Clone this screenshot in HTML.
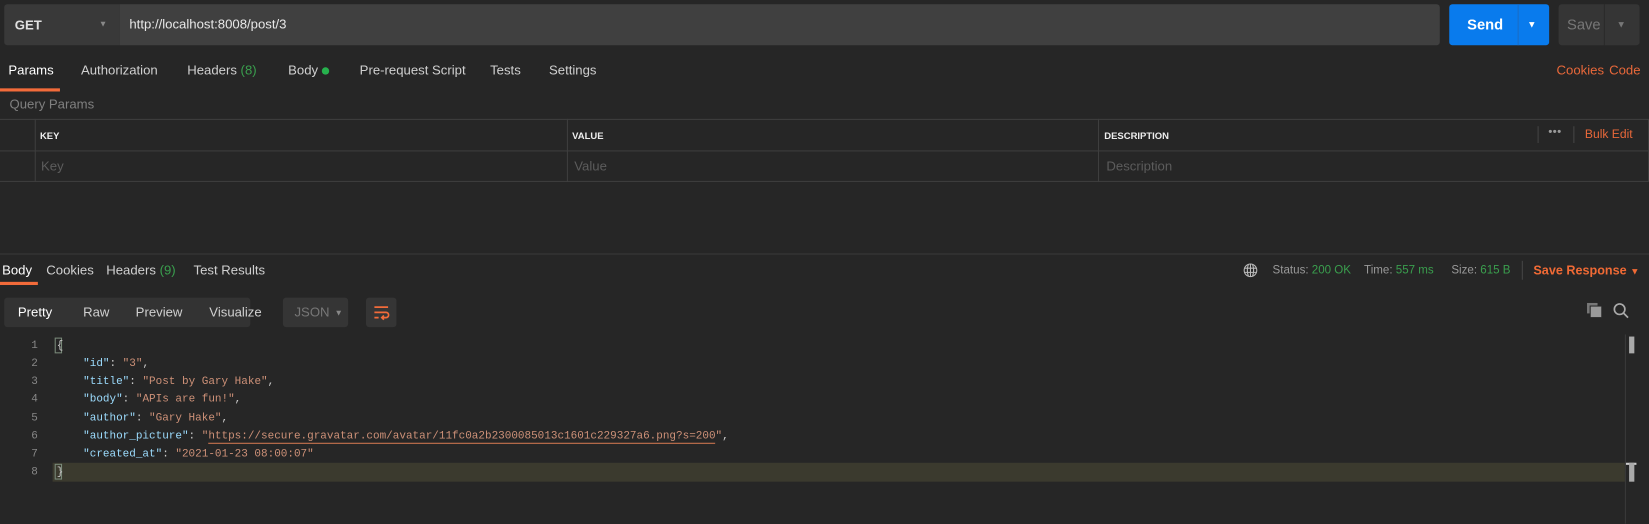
<!DOCTYPE html><html><head><style>
*{margin:0;padding:0;box-sizing:border-box}
body{width:1649px;height:498px;background:#262626;font-family:"Liberation Sans",sans-serif;font-size:12.5px;color:#d0d0d0;position:relative;overflow:hidden}
#w{position:absolute;left:0;top:0;width:1568px;height:474px;transform:scale(1.0517);transform-origin:0 0}
.a{position:absolute;white-space:nowrap}
.o{color:#e8683a}.g{color:#3a9f4e}.m{color:#808080}
.code{font-family:"Liberation Mono",monospace;font-size:10.45px}
.k{color:#9cdcfe}.s{color:#ce9178}
</style></head><body><div id="w">
<div class="a" style="left:4px;top:4px;width:110px;height:39px;background:#393939;border-radius:3px 0 0 3px"></div>
<div class="a" style="left:14px;top:17px;font-weight:bold;color:#e0e0e0">GET</div>
<div class="a" style="left:94px;top:18px;font-size:8px;color:#888">▼</div>
<div class="a" style="left:114px;top:4px;width:1255px;height:39px;background:#404040;border-radius:0 3px 3px 0"></div>
<div class="a" style="left:123px;top:16px;color:#e8e8e8">http://localhost:8008/post/3</div>
<div class="a" style="left:1378px;top:4px;width:95px;height:39px;background:#097bed;border-radius:3px"></div>
<div class="a" style="left:1443px;top:4px;width:1px;height:39px;background:#1b6cc4"></div>
<div class="a" style="left:1395px;top:15px;font-size:14px;font-weight:bold;color:#fff">Send</div>
<div class="a" style="left:1452px;top:18px;font-size:9px;color:#fff">▼</div>
<div class="a" style="left:1482px;top:4px;width:77px;height:39px;background:#353535;border-radius:3px"></div>
<div class="a" style="left:1525px;top:4px;width:1px;height:39px;background:#2a2a2a"></div>
<div class="a" style="left:1490px;top:15px;font-size:14px;color:#777">Save</div>
<div class="a" style="left:1537px;top:18px;font-size:9px;color:#777">▼</div>

<div class="a" style="left:8px;top:60px;color:#fff">Params</div>
<div class="a" style="left:0;top:84px;width:57px;height:3px;background:#f26b3a"></div>
<div class="a" style="left:77px;top:60px">Authorization</div>
<div class="a" style="left:178px;top:60px">Headers <span class="g">(8)</span></div>
<div class="a" style="left:274px;top:60px">Body <span style="display:inline-block;width:7px;height:7px;border-radius:50%;background:#26b14d;vertical-align:0"></span></div>
<div class="a" style="left:342px;top:60px">Pre-request Script</div>
<div class="a" style="left:466px;top:60px">Tests</div>
<div class="a" style="left:522px;top:60px">Settings</div>
<div class="a o" style="left:1480px;top:60px">Cookies</div>
<div class="a o" style="left:1530px;top:60px">Code</div>
<div class="a m" style="left:9px;top:92px">Query Params</div>

<div class="a" style="left:0;top:113px;width:1567px;height:1px;background:#3e3e3e"></div>
<div class="a" style="left:0;top:143px;width:1567px;height:1px;background:#3e3e3e"></div>
<div class="a" style="left:0;top:172px;width:1567px;height:1px;background:#3e3e3e"></div>
<div class="a" style="left:1567px;top:113px;width:1px;height:60px;background:#3e3e3e"></div>
<div class="a" style="left:33px;top:113px;width:1px;height:60px;background:#3e3e3e"></div>
<div class="a" style="left:539px;top:113px;width:1px;height:60px;background:#3e3e3e"></div>
<div class="a" style="left:1044px;top:113px;width:1px;height:60px;background:#3e3e3e"></div>
<div class="a" style="left:38px;top:124px;font-size:9px;font-weight:bold;color:#eee">KEY</div>
<div class="a" style="left:544px;top:124px;font-size:9px;font-weight:bold;color:#eee">VALUE</div>
<div class="a" style="left:1050px;top:124px;font-size:9px;font-weight:bold;color:#eee">DESCRIPTION</div>
<div class="a" style="left:1462px;top:120px;width:1px;height:16px;background:#444"></div>
<div class="a" style="left:1496px;top:120px;width:1px;height:16px;background:#444"></div>
<div class="a" style="left:1472px;top:122px;color:#999;font-size:7px;letter-spacing:0px">●●●</div>
<div class="a o" style="left:1507px;top:122px;font-size:11.5px">Bulk Edit</div>
<div class="a" style="left:39px;top:151px;color:#5c5c5c">Key</div>
<div class="a" style="left:546px;top:151px;color:#5c5c5c">Value</div>
<div class="a" style="left:1052px;top:151px;color:#5c5c5c">Description</div>

<div class="a" style="left:0;top:241px;width:1649px;height:1px;background:#3a3a3a"></div>
<div class="a" style="left:2px;top:250px;color:#fff">Body</div>
<div class="a" style="left:0;top:268px;width:36px;height:3px;background:#f26b3a"></div>
<div class="a" style="left:44px;top:250px">Cookies</div>
<div class="a" style="left:101px;top:250px">Headers <span class="g">(9)</span></div>
<div class="a" style="left:184px;top:250px">Test Results</div>
<svg class="a" style="left:1182px;top:250px" width="14" height="14" viewBox="0 0 14 14" fill="none" stroke="#bbb" stroke-width="1"><circle cx="7" cy="7" r="6"/><path d="M1 5h12M1 9h12M7 1v12M5 1.5q-2 5.5 0 11M9 1.5q2 5.5 0 11"/></svg>
<div class="a" style="left:1210px;top:251px;font-size:11px;color:#999">Status: <span class="g">200 OK</span></div>
<div class="a" style="left:1297px;top:251px;font-size:11px;color:#999">Time: <span class="g">557 ms</span></div>
<div class="a" style="left:1380px;top:251px;font-size:11px;color:#999">Size: <span class="g">615 B</span></div>
<div class="a" style="left:1447px;top:248px;width:1px;height:18px;background:#444"></div>
<div class="a" style="left:1458px;top:250px;font-weight:bold;color:#f06a35;font-size:12px">Save Response <span style="font-size:9px">▼</span></div>

<div class="a" style="left:4px;top:283px;width:234px;height:28px;background:#333;border-radius:3px"></div>
<div class="a" style="left:17px;top:290px;color:#fff">Pretty</div>
<div class="a" style="left:79px;top:290px">Raw</div>
<div class="a" style="left:129px;top:290px">Preview</div>
<div class="a" style="left:199px;top:290px">Visualize</div>
<div class="a" style="left:269px;top:283px;width:62px;height:28px;background:#353535;border-radius:3px"></div>
<div class="a" style="left:280px;top:290px;color:#777">JSON</div>
<div class="a" style="left:318px;top:293px;font-size:8px;color:#888">▼</div>
<div class="a" style="left:348px;top:283px;width:29px;height:28px;background:#353535;border-radius:3px"></div>
<svg class="a" style="left:354px;top:289px" width="17" height="16" viewBox="0 0 17 16" fill="none" stroke="#f26b3a" stroke-width="1.6"><path d="M2 3h13M2 8h11a2.5 2.5 0 0 1 0 5H9M11 11l-2 2 2 2M2 13h4"/></svg>
<svg class="a" style="left:1509px;top:288px" width="14" height="14"><rect x="0" y="0" width="10" height="10" fill="#777"/><rect x="3" y="3" width="11" height="11" fill="#9a9a9a" stroke="#262626" stroke-width="1"/></svg>
<svg class="a" style="left:1534px;top:288px" width="15" height="15" fill="none" stroke="#aaa" stroke-width="1.6"><circle cx="6" cy="6" r="5"/><path d="M10 10l4 4"/></svg>

<div class="a" style="left:50px;top:440px;width:1495px;height:18px;background:#3b3a2e"></div>
<div class="a" style="left:1545px;top:318px;width:1px;height:180px;background:#3a3a3a"></div>
<div class="a" style="left:1549px;top:320px;width:5px;height:16px;background:#aaa"></div>
<div class="a" style="left:1546px;top:440px;width:10px;height:2px;background:#ccc"></div>
<div class="a" style="left:1549px;top:440px;width:5px;height:18px;background:#aaa"></div>
<div class="a code" style="left:0;top:321px;line-height:17.14px;color:#888;width:36px;text-align:right">1<br>2<br>3<br>4<br>5<br>6<br>7<br>8</div>
<div class="a" style="left:52px;top:321px;width:7px;height:15px;border:1px solid #7a8a7a"></div>
<div class="a" style="left:52px;top:441px;width:7px;height:15px;border:1px solid #7a8a7a"></div>
<div class="a code" style="left:54px;top:321px;line-height:17.14px;color:#ccc;white-space:pre">{
    <span class="k">"id"</span>: <span class="s">"3"</span>,
    <span class="k">"title"</span>: <span class="s">"Post by Gary Hake"</span>,
    <span class="k">"body"</span>: <span class="s">"APIs are fun!"</span>,
    <span class="k">"author"</span>: <span class="s">"Gary Hake"</span>,
    <span class="k">"author_picture"</span>: <span class="s">"<span style="border-bottom:1px solid #d07850">https://secure.gravatar.com/avatar/11fc0a2b2300085013c1601c229327a6.png?s=200</span>"</span>,
    <span class="k">"created_at"</span>: <span class="s">"2021-01-23 08:00:07"</span>
}</div>
</div></body></html>
